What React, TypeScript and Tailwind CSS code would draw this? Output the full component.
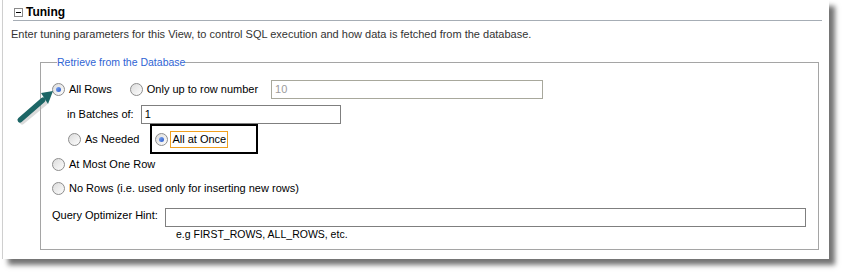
import React from "react";

const Radio = ({ checked = false }: { checked?: boolean }) => (
  <span className="w-[13px] h-[13px] shrink-0 rounded-full border border-[#8d8d8d] bg-gradient-to-br from-[#dcdcdc] to-[#fdfdfd] flex items-center justify-center">
    {checked && (
      <span className="w-[5px] h-[5px] rounded-full bg-gradient-to-br from-[#7fa6f0] to-[#2a58c8]" />
    )}
  </span>
);

const Arrow = () => (
  <svg
    className="absolute left-[14px] top-[86px] pointer-events-none"
    width="44"
    height="40"
    viewBox="0 0 44 40"
  >
    <line x1="7" y1="34" x2="30" y2="15" stroke="#b8b8b8" strokeWidth="5" strokeLinecap="round" opacity="0.5" transform="translate(1 2)" />
    <line x1="6" y1="34" x2="29" y2="14" stroke="#1d6666" strokeWidth="5" strokeLinecap="round" />
    <polygon points="39,5 27,7 34,18" fill="#1d6666" />
  </svg>
);

export default function App() {
  return (
    <div className="w-[845px] h-[274px] bg-white relative font-['Liberation_Sans',Arial,sans-serif] text-[11px] text-black">
      <div className="ml-[2px] w-[827px] h-[259px] bg-white border-l border-[#cfcfcf] shadow-[6px_6px_5px_rgba(0,0,0,0.55)] flex flex-col">
        <div className="ml-[10px] w-[809px] h-[21px] border-b border-[#a6adb5] flex items-end pb-[0px]">
          <span className="w-[9px] h-[9px] ml-[1px] mb-[3px] border border-[#8a8a8a] flex items-center justify-center">
            <span className="w-[5px] h-[1px] bg-black" />
          </span>
          <span className="ml-[3px] font-bold text-[12px] leading-[15px]">Tuning</span>
        </div>
        <p className="ml-[8px] mt-[7px] text-[#333] leading-[13px]">
          Enter tuning parameters for this View, to control SQL execution and how data is fetched from the database.
        </p>
        <fieldset className="ml-[37px] mt-[15px] w-[779px] h-[194px] border border-[#a5a5a5] px-[11px]">
          <legend className="ml-[5px] px-0 text-[#2f64d4] text-[10.5px] leading-[12px]">Retrieve from the Database</legend>
          <div className="mt-[12px] h-[19px] flex items-center">
            <Radio checked />
            <span className="ml-[4px]">All Rows</span>
            <span className="ml-[18px]"><Radio /></span>
            <span className="ml-[4px]">Only up to row number</span>
            <div className="ml-[13px] w-[272px] h-[19px] border border-[#a8a89c] flex items-center pl-[3px] text-[#9c9c9c]">10</div>
          </div>
          <div className="mt-[6px] h-[19px] flex items-center pl-[15px]">
            <span>in Batches of:</span>
            <div className="ml-[7px] w-[200px] h-[19px] border border-[#7f7f7f] flex items-center pl-[3px]">1</div>
          </div>
          <div className="h-[30px] flex items-center pl-[16px]">
            <Radio />
            <span className="ml-[4px]">As Needed</span>
            <div className="ml-[11px] w-[108px] h-[30px] border-2 border-black flex items-center pl-[3px]">
              <Radio checked />
              <span className="ml-[2px] h-[17px] px-[1px] border border-[#f0a020] flex items-center">All at Once</span>
            </div>
          </div>
          <div className="mt-[1px] h-[18px] flex items-center">
            <Radio />
            <span className="ml-[4px]">At Most One Row</span>
          </div>
          <div className="mt-[6px] h-[18px] flex items-center">
            <Radio />
            <span className="ml-[4px]">No Rows (i.e. used only for inserting new rows)</span>
          </div>
          <div className="mt-[11px] h-[19px] flex items-start">
            <span className="mt-[-1px]">Query Optimizer Hint:</span>
            <div className="ml-auto mr-[1px] w-[641px] h-[19px] border border-[#7f7f7f]" />
          </div>
          <div className="h-[16px] flex items-center pl-[124px] text-[10.5px]">e.g FIRST_ROWS, ALL_ROWS, etc.</div>
        </fieldset>
      </div>
      <Arrow />
    </div>
  );
}
